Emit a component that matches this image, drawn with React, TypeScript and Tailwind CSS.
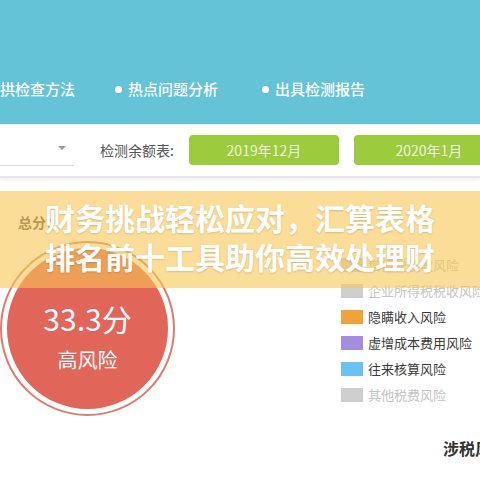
const legend = [
  { label: "增值税税收风险", color: "bg-[#cfcfcf]", text: "text-[#c4c4c4]" },
  { label: "企业所得税税收风险", color: "bg-[#cfcfcf]", text: "text-[#c4c4c4]" },
  { label: "隐瞒收入风险", color: "bg-[#f0a23c]", text: "text-[#3a3a3a]" },
  { label: "虚增成本费用风险", color: "bg-[#a28de0]", text: "text-[#3a3a3a]" },
  { label: "往来核算风险", color: "bg-[#68c2f2]", text: "text-[#3a3a3a]" },
  { label: "其他税费风险", color: "bg-[#cfcfcf]", text: "text-[#c4c4c4]" },
]

export default function App() {
  return (
    <div
      className="relative h-[480px] w-[480px] overflow-hidden bg-white"
      style={{ fontFamily: '"Noto Sans CJK SC", "Noto Sans", sans-serif' }}
    >
      {/* top band */}
      <div className="flex h-[124px] items-end bg-[#64c3d7] pb-[25px]">
        <div className="flex items-center gap-[40px] whitespace-nowrap text-[15px] font-medium leading-[20px] text-white">
          <span>拱检查方法</span>
          <span className="flex items-center gap-[6px]">
            <span className="h-[7px] w-[7px] rounded-full bg-white" />
            热点问题分析
          </span>
          <span className="ml-[4px] flex items-center gap-[6px]">
            <span className="h-[7px] w-[7px] rounded-full bg-white" />
            出具检测报告
          </span>
        </div>
      </div>

      {/* filter bar */}
      <div className="flex h-[54px] items-center border-b-2 border-[#e6e6e6] shadow-[0_2px_3px_rgba(0,0,0,0.06)]">
        <div className="relative h-[32px] w-[74px] shrink-0 border-b border-[#dcdcdc]">
          <span className="absolute right-[8px] top-[12px] h-0 w-0 border-x-[4px] border-t-[4px] border-x-transparent border-t-[#9a9a9a]" />
        </div>
        <span className="ml-[26px] shrink-0 whitespace-nowrap text-[14px] text-[#555]">检测余额表:</span>
        <div className="ml-[15px] flex h-[30px] w-[150px] shrink-0 items-center justify-center rounded-[4px] bg-[#9ccb3d] text-[14px] text-[#eef6dc]">
          2019年12月
        </div>
        <div className="ml-[15px] flex h-[30px] w-[150px] shrink-0 items-center justify-center rounded-[4px] bg-[#9ccb3d] text-[14px] text-[#eef6dc]">
          2020年1月
        </div>
      </div>

      {/* content */}
      <div className="flex items-start">
        <div className="flex shrink-0 flex-col pt-[34px]">
          <span className="ml-[18px] text-[14px] font-bold leading-[20px] text-[#555]">总分：</span>
          <div className="mt-[9px] h-[175px] w-[175px] rounded-full border-2 border-[#dc7b70] p-[5px]">
            <div className="flex h-full w-full flex-col items-center rounded-full bg-[#e2655a] pt-[53px] text-white">
              <span className="text-[30px] leading-[34px]">33.3分</span>
              <span className="mt-[12px] text-[20px] leading-[26px]">高风险</span>
            </div>
          </div>
        </div>
        <div className="ml-[166px] flex shrink-0 flex-col pt-[74px]">
          {legend.map((item) => (
            <div key={item.label} className="flex h-[26px] items-center whitespace-nowrap">
              <span className={`h-[14px] w-[22px] ${item.color}`} />
              <span className={`ml-[5px] text-[13px] ${item.text}`}>{item.label}</span>
            </div>
          ))}
          <span className="ml-[102px] mt-[29px] whitespace-nowrap text-[16px] font-bold leading-[22px] text-[#333]">
            涉税风险分析
          </span>
        </div>
      </div>

      {/* overlay banner */}
      <div className="absolute left-0 top-[191px] flex h-[97px] w-full flex-col items-center justify-center bg-[#f8c652]/60 pb-[6px]">
        <p className="text-[30px] font-bold leading-[39px] text-white [text-shadow:0_1px_2px_rgba(0,0,0,0.15)]">
          财务挑战轻松应对，汇算表格
        </p>
        <p className="text-[30px] font-bold leading-[39px] text-white [text-shadow:0_1px_2px_rgba(0,0,0,0.15)]">
          排名前十工具助你高效处理财
        </p>
      </div>
    </div>
  )
}
